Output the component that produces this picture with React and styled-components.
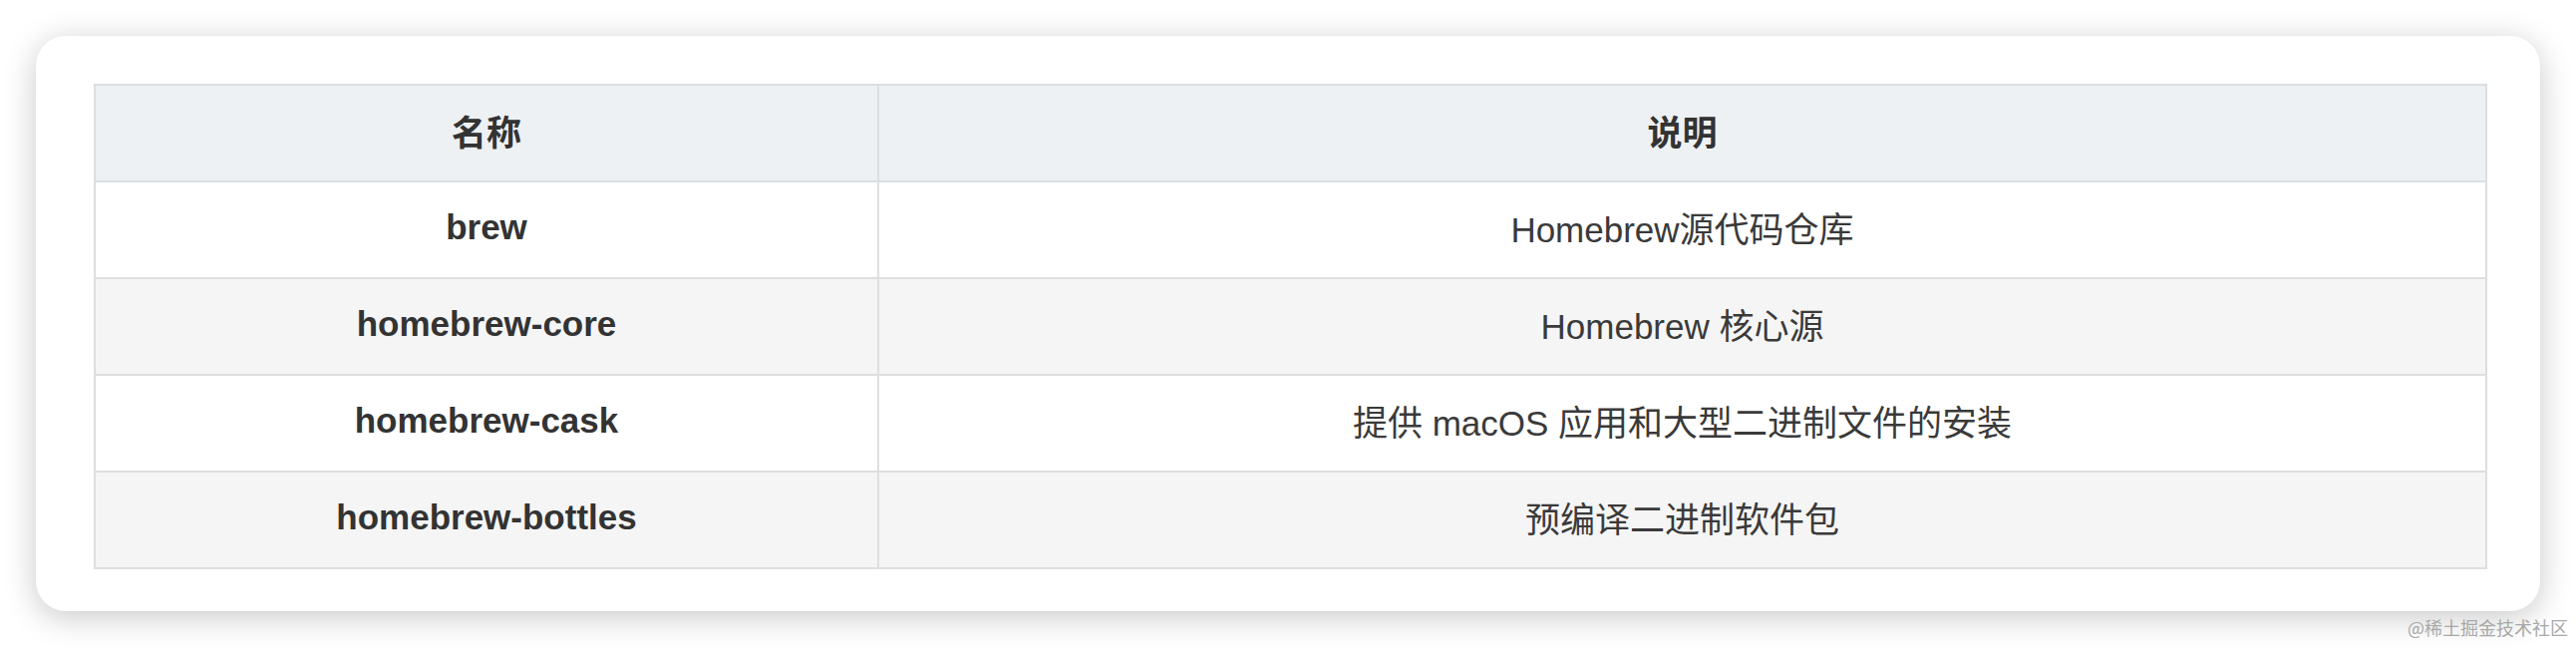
import React from 'react';
import styled, { createGlobalStyle } from 'styled-components';

const rows = [
  { name: 'brew', desc: 'Homebrew源代码仓库' },
  { name: 'homebrew-core', desc: 'Homebrew 核心源' },
  { name: 'homebrew-cask', desc: '提供 macOS 应用和大型二进制文件的安装' },
  { name: 'homebrew-bottles', desc: '预编译二进制软件包' },
];

export default function App() {
  return (
    <>
      <GlobalStyle />
      <Page>
        <Card>
          <Table>
            <colgroup>
              <NameCol />
              <col />
            </colgroup>
            <thead>
              <HeadRow>
                <Th>名称</Th>
                <Th>说明</Th>
              </HeadRow>
            </thead>
            <tbody>
              {rows.map((row, i) => (
                <Row key={row.name} $striped={i % 2 === 1}>
                  <NameCell>{row.name}</NameCell>
                  <DescCell>{row.desc}</DescCell>
                </Row>
              ))}
            </tbody>
          </Table>
        </Card>
        <Watermark>@稀土掘金技术社区</Watermark>
      </Page>
    </>
  );
}

const GlobalStyle = createGlobalStyle`
  html, body {
    margin: 0;
    padding: 0;
    background: #ffffff;
  }
  body {
    font-family: "Liberation Sans", "Noto Sans CJK SC", sans-serif;
    color: #333;
  }
`;

const Page = styled.div`
  position: relative;
  width: 2584px;
  height: 650px;
  padding: 36px 0 0 36px;
  box-sizing: border-box;
`;

const Card = styled.div`
  width: 2512px;
  height: 577px;
  box-sizing: border-box;
  padding: 48px 53px 41px 58px;
  background: #fff;
  border-radius: 30px;
  box-shadow: 0 6px 32px rgba(0, 0, 0, 0.22);
`;

const Table = styled.table`
  width: 2401px;
  height: 486px;
  border-collapse: collapse;
  table-layout: fixed;
  font-size: 35px;
`;

const NameCol = styled.col`
  width: 786px;
`;

const HeadRow = styled.tr`
  height: 97px;
`;

const Th = styled.th`
  box-sizing: border-box;
  height: 97px;
  padding: 0 0 6px;
  background: #edf1f4;
  border: 2px solid #dcdfe2;
  font-weight: bold;
  color: #333;
  text-align: center;
  vertical-align: middle;
`;

const Row = styled.tr`
  height: 97px;
  background: ${(p) => (p.$striped ? '#f5f5f5' : '#ffffff')};
`;

const Cell = styled.td`
  padding: 0 0 6px;
  border: 2px solid #dedede;
  text-align: center;
  vertical-align: middle;
  color: #333;
`;

const NameCell = styled(Cell)`
  font-weight: bold;
`;

const DescCell = styled(Cell)`
  font-weight: normal;
  color: #3a3a3a;
`;

const Watermark = styled.div`
  position: absolute;
  right: 8px;
  bottom: 8px;
  font-family: "Noto Sans CJK SC", sans-serif;
  font-size: 18px;
  color: #a8a8a8;
`;
